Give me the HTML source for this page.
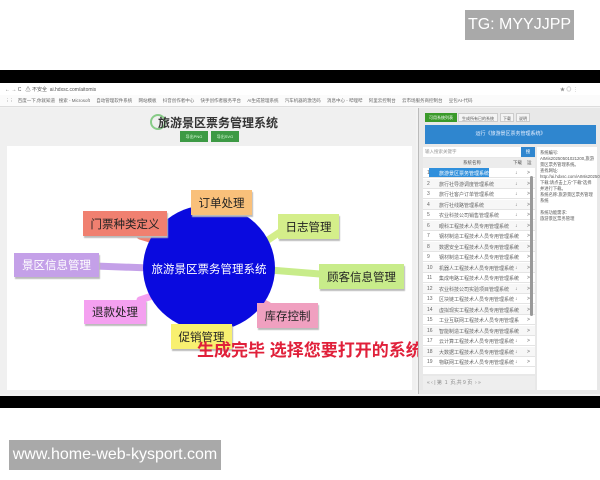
<!DOCTYPE html><html><head><meta charset="utf-8"><style>
*{margin:0;padding:0;box-sizing:border-box}
body{width:600px;height:480px;background:#fff;position:relative;overflow:hidden;font-family:"Liberation Sans","Noto Sans CJK SC",sans-serif}
.a{position:absolute}
.box{position:absolute;font-size:11.5px;color:#222;display:flex;align-items:center;justify-content:center;box-shadow:1px 2px 1px #bbb}
.row{position:absolute;left:423px;width:112px;height:10px;font-size:5px;color:#666;border-bottom:1px solid #e4e4e4}
.row span{position:absolute}
</style></head><body>
<div class="a" style="left:465px;top:10px;width:109px;height:30px;background:#a9a9a9;color:#fff;font-size:16px;line-height:30px;text-align:center">TG: MYYJJPP</div>
<div class="a" style="left:0;top:70px;width:600px;height:338px;background:#000"></div>
<div class="a" style="left:0;top:83px;width:600px;height:313px;background:#f3f3f3"></div>
<div class="a" style="left:0;top:83px;width:600px;height:12px;background:#fff;font-size:5px;color:#555;padding:3px 0 0 5px">← → C &nbsp; ⚠ 不安全 &nbsp;ai.hdxsc.com/aitomis<span style="position:absolute;left:560px;color:#888">★ ◎ ⋮</span></div>
<div class="a" style="left:0;top:95px;width:600px;height:12px;background:#fbfbfb;font-size:4.5px;color:#666;padding:3px 0 0 5px;white-space:nowrap;border-bottom:1px solid #ddd">⋮⋮ &nbsp; 百度一下,你就知道 &nbsp; 搜索 - Microsoft &nbsp; &nbsp; 自动管理软件系统 &nbsp; &nbsp; 网站模板 &nbsp; &nbsp; 抖音创作者中心 &nbsp; &nbsp; 快手创作者服务平台 &nbsp; &nbsp; AI生成管理系统 &nbsp; &nbsp; 汽车机器的激活码 &nbsp; &nbsp; 消息中心 - 哔哩哔 &nbsp; &nbsp; 阿里云控制台 &nbsp; &nbsp; 云市场服务商控制台 &nbsp; &nbsp; 豆包AI-代码</div>
<div class="a" style="left:0;top:108px;width:416px;height:286px;background:#f0f0f0"></div>
<div class="a" style="left:150px;top:114px;width:16px;height:16px;border:2px solid #8c8;border-radius:50%"></div>
<div class="a" style="left:158px;top:114px;font-size:12px;font-weight:bold;color:#333">旅游景区票务管理系统</div>
<div class="a" style="left:180px;top:131px;width:28px;height:11px;background:#3d9a45;color:#dfd;font-size:4px;text-align:center;line-height:11px">导出PNG</div>
<div class="a" style="left:211px;top:131px;width:28px;height:11px;background:#3d9a45;color:#dfd;font-size:4px;text-align:center;line-height:11px">导出SVG</div>
<div class="a" style="left:7px;top:146px;width:405px;height:244px;background:#fff"></div>
<svg class="a" style="left:0;top:0" width="420" height="400">
<g stroke-width="7" stroke-linecap="round">
<line x1="95" y1="266" x2="150" y2="268" stroke="#c4a0e8"/>
<line x1="140" y1="236" x2="160" y2="242" stroke="#f08070"/>
<line x1="280" y1="232" x2="268" y2="240" stroke="#d4ee8a"/>
<line x1="320" y1="274" x2="270" y2="270" stroke="#c8ec8a"/>
<line x1="140" y1="300" x2="155" y2="295" stroke="#f4a0f0"/>
<line x1="268" y1="305" x2="258" y2="300" stroke="#f0a0c0"/>
</g>
<ellipse cx="209" cy="268" rx="66" ry="63" fill="#0a0adf"/>
</svg>
<div class="a" style="left:146px;top:261px;width:126px;text-align:center;color:#fff;font-size:11.5px">旅游景区票务管理系统</div>
<div class="box" style="left:191px;top:190px;width:61px;height:25px;background:#f9c07a">订单处理</div>
<div class="box" style="left:83px;top:211px;width:84px;height:25px;background:#f08070">门票种类定义</div>
<div class="box" style="left:278px;top:214px;width:61px;height:25px;background:#d4ee8a">日志管理</div>
<div class="box" style="left:14px;top:253px;width:85px;height:24px;background:#c4a0e8;color:#fff">景区信息管理</div>
<div class="box" style="left:319px;top:264px;width:85px;height:25px;background:#c8ec8a">顾客信息管理</div>
<div class="box" style="left:84px;top:300px;width:62px;height:24px;background:#f4a0f0">退款处理</div>
<div class="box" style="left:257px;top:303px;width:61px;height:25px;background:#f0a0c0">库存控制</div>
<div class="box" style="left:171px;top:324px;width:61px;height:25px;background:#f8f070">促销管理</div>
<div class="a" style="left:197px;top:336px;font-size:17px;font-weight:bold;color:#e0203a;white-space:nowrap">生成完毕 选择您要打开的系统</div>
<div class="a" style="left:418px;top:108px;width:182px;height:286px;background:#e8e8e8;border-left:1px solid #bbb"></div>
<div class="a" style="left:425px;top:113px;width:32px;height:9px;background:#3a9a2a;font-size:4px;color:#fff;text-align:center;line-height:9px">可用系统列表</div>
<div class="a" style="left:458px;top:113px;width:40px;height:9px;background:#f4f4f4;font-size:4px;color:#555;text-align:center;line-height:9px;border:1px solid #ccc">生成所有已的系统</div>
<div class="a" style="left:500px;top:113px;width:14px;height:9px;background:#f4f4f4;font-size:4px;color:#555;text-align:center;line-height:9px;border:1px solid #ccc">下载</div>
<div class="a" style="left:516px;top:113px;width:14px;height:9px;background:#f4f4f4;font-size:4px;color:#555;text-align:center;line-height:9px;border:1px solid #ccc">说明</div>
<div class="a" style="left:425px;top:125px;width:171px;height:19px;background:#2f86cf;font-size:5px;color:#e8f0ff;text-align:center;line-height:19px">运行《旅游景区票务管理系统》</div>
<div class="a" style="left:423px;top:147px;width:112px;height:10px;background:#fff;font-size:4.5px;color:#999;padding:2px">输入搜索关键字</div>
<div class="a" style="left:521px;top:147px;width:14px;height:10px;background:#2f86cf;font-size:4.5px;color:#fff;text-align:center;line-height:10px">搜</div>
<div class="a" style="left:537px;top:147px;width:60px;height:243px;background:#fff;font-size:4.3px;color:#555;padding:3px;line-height:6px">系统编号:<br>AIMis20250501021200,旅游景区票务管理系统。<br>查找网址:<br>http://ai.hdxsc.com/AIMis20250501021200<br>下载:请点击上方"下载"选择并进行下载。<br>系统名称:旅游景区票务管理系统<br><br>系统功能需求:<br>旅游景区票务管理</div>
<div class="a" style="left:423px;top:158px;width:112px;height:10px;background:#ececec;font-size:4.5px;color:#555"><span style="position:absolute;left:40px;top:2px">系统名称</span><span style="position:absolute;left:90px;top:2px">下载</span><span style="position:absolute;left:104px;top:2px">运</span></div>
<div class="a" style="left:423px;top:168px;width:112px;height:206px;background:#fff"></div>
<div id="rows"></div>
<div class="a" style="left:530px;top:176px;width:3px;height:140px;background:#999;border-radius:2px"></div>
<div class="a" style="left:423px;top:376px;width:112px;height:14px;background:#eee;font-size:5px;color:#888;padding:3px 4px;white-space:nowrap">« ‹ | 第 &nbsp;1&nbsp; 页,共 9 页 &nbsp;› »</div>
<script>
var n=["旅游景区票务管理系统","旅行社导游调度管理系统","旅行社客户订单管理系统","旅行社线路管理系统","农业科技公司销售管理系统","眼科工程技术人员专用管理系统","钢材制造工程技术人员专用管理系统","数据安全工程技术人员专用管理系统","钢材制造工程技术人员专用管理系统","机器人工程技术人员专用管理系统","集成电路工程技术人员专用管理系统","农业科技公司实验项目管理系统","区块链工程技术人员专用管理系统","虚拟现实工程技术人员专用管理系统","工业互联网工程技术人员专用管理系","智能制造工程技术人员专用管理系统","云计算工程技术人员专用管理系统","大数据工程技术人员专用管理系统","物联网工程技术人员专用管理系统"];
var h="";for(var i=0;i<19;i++){h+='<div class="row" style="top:'+(168+i*10.5)+'px;background:'+(i%2?'#f7f7f7':'#fff')+'">'+(i?'':'<span style="left:6px;top:0;width:60px;height:9px;background:#2f8fdc"></span>')+'<span style="left:4px;top:2px">'+(i+1)+'</span><span style="left:16px;top:2px;color:'+(i?'#666':'#fff')+'">'+n[i]+'</span><span style="left:92px;top:2px">↓</span><span style="left:104px;top:2px">&gt;</span></div>';}
document.getElementById("rows").outerHTML=h;
</script>
<div class="a" style="left:9px;top:440px;width:212px;height:30px;background:#a9a9a9;color:#fff;font-size:16px;line-height:30px;text-align:center">www.home-web-kysport.com</div>
</body></html>
